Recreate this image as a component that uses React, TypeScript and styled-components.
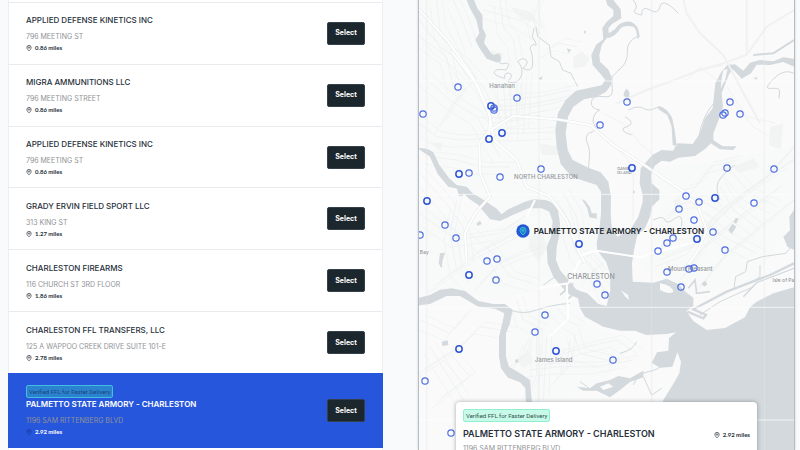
import React from "react";
import styled, { createGlobalStyle, css } from "styled-components";

const GlobalStyle = createGlobalStyle`
  * { box-sizing: border-box; }
  html, body { margin: 0; padding: 0; }
  body {
    background: #f8fafc;
    color: #27303a;
    font-family: Inter, "Open Sans", sans-serif;
    overflow: hidden;
  }
  h2, h3, p, ul { margin: 0; padding: 0; }
`;

const Page = styled.main`
  display: grid;
  grid-template-columns: 375fr 377fr;
  gap: 35px;
  padding: 0 5px 0 8px;
  height: 100vh;
`;

const DealerList = styled.ul`
  display: grid;
  grid-template-rows: repeat(6, minmax(min-content, 1fr)) 75px;
  padding: 2px 0;
  list-style: none;
  background: #fff;
  border-left: 1px solid #eceef1;
  border-right: 1px solid #eceef1;
`;

const DealerRow = styled.li<{ $selected?: boolean }>`
  display: flex;
  align-items: center;
  justify-content: space-between;
  padding: 0 17px;
  border-top: 1px solid #e9ebee;
  color: #27303a;
  ${(p) =>
    p.$selected &&
    css`
      margin: 0 -1px;
      padding: 0 18px;
      border-top-color: #2656dc;
      background: #2656dc;
      color: #fff;
    `}
`;

const DealerInfo = styled.div`
  display: flex;
  flex-direction: column;
  align-items: flex-start;
`;

const DealerName = styled.h3<{ $strong?: boolean }>`
  font-size: 8px;
  line-height: 12px;
  font-weight: ${(p) => (p.$strong ? 600 : 500)};
  white-space: nowrap;
`;

const Address = styled.p`
  margin-top: 5px;
  font-size: 7px;
  line-height: 12px;
  color: #8f9296;
  white-space: nowrap;
`;

const Distance = styled.p<{ $pin?: string }>`
  display: flex;
  align-items: center;
  gap: 3px;
  margin-top: 1px;
  font-family: Lato, sans-serif;
  font-size: 6px;
  line-height: 8px;
  font-weight: 700;
  white-space: nowrap;
  svg {
    width: 6px;
    height: 6px;
    color: ${(p) => p.$pin || "#3b434c"};
  }
`;

const Badge = styled.span<{ $onBlue?: boolean }>`
  display: flex;
  align-items: center;
  width: fit-content;
  height: 13px;
  padding: 0 2px;
  border: 1px solid ${(p) => (p.$onBlue ? "#43bde2" : "#91efd0")};
  border-radius: 2px;
  background: ${(p) => (p.$onBlue ? "#2b83d0" : "#c8fae9")};
  color: ${(p) => (p.$onBlue ? "#1b4379" : "#33504c")};
  font-family: Roboto, sans-serif;
  font-size: 6px;
  font-weight: 400;
  white-space: nowrap;
`;

const SelectButton = styled.button`
  width: 38px;
  height: 23px;
  padding: 0;
  border: 1px solid #34414b;
  border-radius: 2px;
  background: #1b262d;
  color: #fff;
  font: 700 7px/10px Inter, sans-serif;
  cursor: pointer;
`;

const MapPanel = styled.section`
  position: relative;
  height: 100vh;
  overflow: hidden;
  border-left: 1px solid #b9bcbe;
  border-right: 1px solid #b9bcbe;
  box-shadow: 0 0 2px #c9cccf;
  background: #fafafa;
`;

const MapDrawing = styled.svg`
  display: block;
  width: 100%;
  height: 100%;
`;

const Marker = styled.button`
  position: absolute;
  display: flex;
  width: 8px;
  height: 8px;
  padding: 0;
  border: 0;
  border-radius: 50%;
  background: transparent;
  transform: translate(-50%, -50%);
  cursor: pointer;
`;

const ActiveMarker = styled.button`
  position: absolute;
  display: flex;
  align-items: center;
  gap: 4px;
  height: 14px;
  padding: 0;
  border: 0;
  background: transparent;
  color: #20252b;
  font: 600 8px/14px Inter, sans-serif;
  white-space: nowrap;
  transform: translate(-7px, -50%);
  cursor: pointer;
  svg {
    width: 14px;
    height: 14px;
  }
`;

const Place = styled.span<{ $size: number }>`
  position: absolute;
  transform: translate(-50%, -50%);
  color: #93989c;
  font: 500 ${(p) => p.$size}px/8px Inter, "Open Sans", sans-serif;
  white-space: nowrap;
`;

const DetailCard = styled.article`
  position: absolute;
  top: calc(100% - 48px);
  left: 37px;
  right: 37px;
  padding: 7px;
  border-radius: 4px;
  background: #fff;
  box-shadow: 0 0 4px rgba(40, 50, 60, 0.4);
`;

const CardHeading = styled.div`
  display: flex;
  align-items: center;
  justify-content: space-between;
  margin-top: 5px;
`;

const CardName = styled.h2`
  font-size: 9px;
  line-height: 14px;
  font-weight: 600;
`;

const CardAddress = styled(Address)`
  margin-top: 2px;
`;

const Pin = () => (
  <svg viewBox="0 0 24 24" fill="none" stroke="currentColor" strokeWidth="3" aria-hidden="true">
    <path d="M20.5 10c0 5.500-4.500 10.500-8.500 13-4-2.500-8.500-7.500-8.500-13a8.500 8.500 0 0 1 17 0Z" />
    <circle cx="12" cy="10" r="3" />
  </svg>
);

type Dealer = { name: string; address: string; miles: string; verified?: boolean };

const dealers: Dealer[] = [
  { name: "APPLIED DEFENSE KINETICS INC", address: "796 MEETING ST", miles: "0.86 miles" },
  { name: "MIGRA AMMUNITIONS LLC", address: "796 MEETING STREET", miles: "0.86 miles" },
  { name: "APPLIED DEFENSE KINETICS INC", address: "796 MEETING ST", miles: "0.86 miles" },
  { name: "GRADY ERVIN FIELD SPORT LLC", address: "313 KING ST", miles: "1.27 miles" },
  { name: "CHARLESTON FIREARMS", address: "116 CHURCH ST 3RD FLOOR", miles: "1.86 miles" },
  { name: "CHARLESTON FFL TRANSFERS, LLC", address: "125 A WAPPOO CREEK DRIVE SUITE 101-E", miles: "2.78 miles" },
  { name: "PALMETTO STATE ARMORY - CHARLESTON", address: "1196 SAM RITTENBERG BLVD", miles: "2.92 miles", verified: true },
];

// Map coordinates: x 57..1182, y 0..1350. The third value marks stacked dealers.
const markers: [number, number, number?][] = [
  [175, 262], [351, 293], [68, 343], [273, 317, 1], [283, 324], [281, 331], [307, 400, 1],
  [266, 417, 1], [178, 521, 1], [208, 520], [299, 530], [424, 506], [82, 602, 1], [136, 676],
  [61, 704], [167, 714], [262, 783], [292, 778], [207, 824, 1], [289, 840], [538, 733, 1],
  [591, 853], [615, 886], [435, 944], [405, 995], [177, 1047, 1], [468, 1054, 1], [639, 1080],
  [76, 1142], [154, 1300], [682, 306], [600, 375], [696, 504, 1], [989, 307], [968, 344],
  [975, 339], [1020, 343], [981, 503], [1121, 508], [858, 587], [896, 605], [946, 594, 1],
  [1063, 610], [837, 628], [881, 660], [938, 697], [820, 714], [800, 730], [774, 754],
  [890, 717, 1], [974, 750], [866, 806], [881, 804], [802, 815], [842, 860],
];

const places: [string, number, number, number][] = [
  ["Hanahan", 306, 257, 6],
  ["NORTH CHARLESTON", 438, 530, 6],
  ["CHARLESTON", 573, 832, 7],
  ["DANIEL", 673, 506, 4],
  ["ISLAND", 673, 518, 4],
  ["James Island", 461, 1080, 6],
  ["Mount Pleasant", 871, 806, 6],
  ["Isle of Palms", 1163, 839, 5],
  ["Bay", 73, 755, 5],
];

const at = (x: number, y: number) => ({
  left: `${((x - 57) / 1125) * 100}%`,
  top: `${(y / 1350) * 100}%`,
});

const minorStreets = [
  "M57 60L120 140L190 190L250 260L300 360", "M70 230L150 300L230 350L300 470", "M110 0L120 90L170 180L215 250",
  "M160 0L190 70L215 140", "M60 110L140 170L160 260", "M300 300L420 290L510 270", "M250 330L340 330L460 310L530 290",
  "M270 370L350 360L420 345", "M300 400L380 400L470 395", "M310 250L320 380", "M350 240V370", "M380 230L370 400",
  "M250 30L360 60L420 100", "M300 0L310 80L340 120L350 180", "M420 0L400 50L410 100", "M440 150L480 130L530 140",
  "M57 370L110 410L180 420L260 415", "M60 520L130 600L190 680L205 800", "M90 470L170 480L240 500L330 500",
  "M120 380L170 300L200 260", "M57 640L130 690L170 720L300 700L390 640", "M100 860L170 810L230 760L310 720L370 690",
  "M170 600L150 700L170 810L210 850", "M210 700L280 760L330 830L400 850", "M240 850L300 790L370 760L430 740",
  "M57 1120L180 1040L240 980L330 995", "M150 1060L210 1130L130 1190L110 1205", "M60 960L150 1000L200 940",
  "M90 1040L140 1120L190 1200", "M390 1010L360 1080L330 1100", "M410 1000V1130L380 1190", "M440 1010L430 1200",
  "M390 1110L480 1100L590 1100L700 1080", "M460 1070L560 1040L650 1020L710 1060", "M520 1000L540 1060L620 1080",
  "M470 1140L500 1100L510 1020", "M470 920L500 960L540 980", "M350 900L370 960L430 990",
  "M490 630L510 700L530 760L590 820L620 890", "M490 580L530 650L540 720", "M540 780L580 760L620 810", "M560 830L610 790",
  "M800 650L850 610L900 600L970 640", "M770 750L830 700L920 690L1010 600L1100 530L1182 440",
  "M780 780L880 740L940 650L1030 580L1182 480", "M850 830L920 730L1020 650L1130 570", "M900 860L970 770L1080 680L1182 600",
  "M850 570L890 560L930 500L1010 480", "M900 650L970 710L1070 760", "M960 560L1000 630L1080 690", "M990 510L1050 580L1130 620",
  "M610 340L670 370L720 430L760 465", "M630 420L700 500L700 660", "M650 310L740 270L810 245L900 210L970 195",
  "M860 240L900 200L950 240", "M990 300L1060 380L1110 410", "M980 260L1040 350L1130 370", "M1040 160V0", "M850 0L860 40L900 100L970 165",
];

const creeks = [
  "M300 180q-5 15 15 10t3 20q-30-5-35 5t30 20q0-20 15-15t-5 25q30 10 40-15t-10-45q15-15 25-5t-10 25q30 15 30-15t-8-45q5-15 15-10t-8-25l5-25",
  "M408 80l5 30 35 25 5 35 25 15 10 25 25 10 20 40",
  "M710 110q-30 15-28 45t-20 50-25 25 0 35-25 25q-35-5-38 15t25 25q-20 10-20 35l15 30",
  "M570 395q-18 15-8 35t5 55 10 45", "M600 380l-30 20", "M685 330q30-15 45-5t35 0 30 5l20 25 5 35 5 50",
  "M675 350q35 20 5 30t15 25", "M700 0q15 20 5 30t20 15q0-30 25-15t30-10 40 5l15 15",
  "M1182 220q-30-15-60 15t-15 30 25 0 5 30", "M760 660q30-15 35 0t30-5 20 25",
  "M1182 730l-25 30-70 10-45 15-5 30-30 15-5 35", "M1080 795v35l-30 20", "M960 600q-15-35-5-55t50-50",
  "M57 915q50-45 100-35", "M330 930q40 15 80 0t100-20", "M660 1060q40-10 50-35", "M700 1155q15-35 45-40t50-25",
  "M950 300q-45 45-55 120", "M122 800q-5-25 12-40", "M480 820l-50 35", "M540 1145l35 25 30-5", "M730 1130l25 55 30-20",
];

const parks = [
  "M330 20l60 15 25 30-50-5z", "M520 170l25-15 25 20-15 25-35 5z", "M420 430l55 10 10 25-60 0z",
  "M1110 380l40-8-8 75-35-10z", "M390 710l35-25 15 60-25 40-30-45z", "M350 1080l35-30 15 35-30 20z",
  "M1000 500l60-25 20 25-65 20z", "M270 150l40 10-10 30z", "M90 425l40 5-10 25z", "M820 600l20-5 5 25-20 8z",
];

const ponds = [
  "M670 285l4-12 6-7 8 10v14l-10 3z", "M985 690l12-18 12 8-14 22z", "M1000 665l8-12 8 4-8 14z", "M905 850l12-8 5 12-10 6z",
  "M500 145l14 4-8 10z", "M550 95l8-4-2 12z", "M415 235l14-6-6 12z", "M700 570l6 6-8 6z", "M125 1025l18-4 2 14-18 3z",
  "M345 1080l8-3 2 10-8 2z", "M1060 235l10-4 2 8z", "M170 565l16 4 6 16-14 4z", "M500 868l14-8 8 8-14 10z",
];

const RegionMap = () => (
  <MapDrawing viewBox="57 0 1125 1350" preserveAspectRatio="xMidYMid slice" aria-hidden="true">
    <rect x="-1000" y="0" width="3200" height="1350" fill="#fafafa" />
    <g fill="#f8f9f9">
      <path d="M57 0H420L450 150L530 290L470 360L480 500L600 560V700L620 890L500 850L450 720L400 650L240 620L57 430Z" />
      <path d="M57 620L290 680L440 640L450 800L480 850L300 900L57 870Z" />
      <path d="M340 930L520 900L560 970L700 1030L620 1130L500 1190L410 1200L320 1080Z" />
      <path d="M770 500L900 490L1182 440V650L1060 850L880 880L730 810L780 650Z" />
    </g>
    <g fill="#f1f4f3">{parks.map((d) => <path key={d} d={d} />)}</g>

    <g fill="none" stroke="#ebedee" strokeWidth="2">
      {minorStreets.map((d) => <path key={d} d={d} />)}
    </g>
    <g fill="none" stroke="#eff1f1" strokeWidth="2">
      {minorStreets.slice(0, 51).map((d) => <path key={d} d={d} transform="translate(16 -14)" />)}
      {minorStreets.slice(0, 51).map((d) => <path key={d} d={d} transform="translate(-18 22)" />)}
    </g>
    <g fill="none" stroke="#d3d8db" strokeWidth="3" strokeLinejoin="round">
      {creeks.map((d) => <path key={d} d={d} />)}
    </g>

    <g fill="#d3d9dc">
      {ponds.map((d) => <path key={d} d={d} />)}
      <path d="M200 0H222L232 25L247 45L248 85L258 105L252 128L270 155L280 165L298 160L304 176L294 188L260 176L236 140L226 120L238 100L229 60L208 20Z" />
      <path d="M57 444Q85 444 100 457L118 495L148 535L170 555L200 560L218 580L255 602L290 626L305 643L325 628L375 605L402 598L435 600Q462 605 474 632L480 670L478 705L470 740L468 780L480 810L510 845L530 870L562 880L595 912L620 918L631 870L630 820L618 785L592 752L590 730L598 690L603 640L603 575L590 555L560 545L515 530L482 492L470 440L466 390L474 340L497 300L528 272L570 263L605 256L616 240L600 220L578 195L574 165L588 135L610 118L607 84L620 65L640 48L640 30L622 15L618 0H640L662 28L664 55L636 72L625 85L627 105L605 135L598 165L600 185L624 208L635 230L633 255L618 275L592 290L552 298L520 320L504 350L497 400L503 450L518 480L565 503L602 517L625 545L633 590L632 640L635 680L652 710L690 690L715 650L728 605L728 585L719 550L722 505L742 482L757 465L785 450L819 452L833 430L878 432L900 400L915 355L938 325L946 250L964 215L982 195L1005 193L1030 212L1050 188L1080 180L1120 184L1150 172L1182 176V200L1150 186L1110 195L1070 194L1053 220L1025 236L998 207L986 225L965 280L969 320L956 360L940 400L940 420L968 439H1010L1000 450L960 448L932 430L918 445L885 468L835 473L810 485L785 482L764 497L753 525L755 550L778 570V598L756 620L750 650L735 685L712 705L703 745L696 790L698 845L760 848L800 836L835 853L860 878L880 893V918L859 933L880 963L920 990L975 984L1035 952L1050 922L1070 905L1120 880L1182 862V1350H740L790 1200L818 1155L838 1120L843 1085L832 1057L817 1100L780 1103L755 1088L771 1057L805 1052L807 1015L828 997L800 1002L738 1005L705 992L660 992L610 980L555 950L540 925L534 895L510 885L485 860L460 830L443 790L440 740L453 710L458 665L448 635L425 625L385 625L350 640L300 663L270 658L235 615L205 595L180 568L145 560L113 522L90 470L57 448Z" />
      <path d="M57 893L90 885L120 869L155 865L195 873L235 903L280 912L315 912L338 930L330 970L318 1000V1070L327 1100L360 1120L390 1140L397 1220H378L376 1165L360 1147L324 1133L303 1105L297 1070V1010L307 970L313 940L285 926L235 920L180 888L140 888L90 912L57 916Z" />
      <path d="M700 80Q712 88 711 118L719 110Q718 75 692 65Q660 62 645 88L620 104L623 115Q648 108 660 87Q670 73 700 80Z" />
      <path d="M545 597L555 602L570 622L575 640H590V656L568 652L562 625Z" />
      <path d="M230 670L240 662L245 672L232 678Z" />
      <path d="M800 330L815 350L824 390L830 435H818L815 380L802 345L775 328V318Z" />
      <path d="M1182 630L1168 650L1170 690L1150 710L1162 740L1182 750Z" />
      <path d="M530 1160L570 1165L590 1150L630 1140L655 1128L690 1135L730 1112V1132L690 1146L660 1170L630 1192L590 1172L550 1172Z" />
      <path d="M120 760L135 758L128 780L125 805L116 790Z" />
    </g>
    <g fill="#fafafa">
      <path d="M662 870L684 885L687 900L676 890Z" />
      <path d="M780 850Q815 855 820 875Q805 885 780 870Z" />
      <path d="M965 235L970 210L983 207L975 240L962 265Z" />
      <path d="M600 1160L625 1150L640 1160L610 1170Z" />
    </g>
    <g fill="none" stroke="#d3d9dc" strokeWidth="6">
      <path d="M1060 165L1120 160L1182 120" />
      <path d="M862 935L910 955L918 945L880 928L980 875L1110 825L1182 790" strokeWidth="7" />
      <path d="M900 945L960 905L1060 860" strokeWidth="3" />
      <path d="M1182 805L1070 848L1030 890" strokeWidth="4" />
      <path d="M865 865L885 840L890 880L930 875" strokeWidth="5" />
      <path d="M480 885L520 850M500 900L535 870" strokeWidth="5" />
    </g>

    <g fill="none" stroke="#e7e9ea" strokeWidth="9" strokeLinejoin="round">
      <path d="M57 28L145 125L215 225L265 330L282 420L350 480L380 560L450 590L500 660L530 740L555 790" />
      <path d="M155 155L235 260L270 350L266 417" />
      <path d="M200 790L195 700L225 640L270 590L240 520L238 430L265 395L340 348L470 358L570 375L640 435L740 500L850 575L895 620L920 690L895 750L860 800" />
    </g>
    <g fill="none" stroke="#fff" strokeWidth="6" strokeLinejoin="round">
      <path d="M57 28L145 125L215 225L265 330L282 420L350 480L380 560L450 590L500 660L530 740L555 790" />
      <path d="M155 155L235 260L270 350L266 417" />
      <path d="M200 790L195 700L225 640L270 590L240 520L238 430L265 395L340 348L470 358L570 375L640 435L740 500L850 575L895 620L920 690L895 750L860 800" />
      <path d="M545 765L590 752L720 772L770 755L890 725" />
      <path d="M415 865L505 850L540 780M500 850L505 955L450 1010M380 650L405 600" />
    </g>
    <g fill="none" stroke="#f0f1f1" strokeWidth="6">
      <path d="M650 310L740 270L810 245L900 210L970 190L1040 165L1100 80L1182 30" />
      <path d="M1040 165V0M850 0L860 40L900 100L970 165L1020 260L1080 370" />
    </g>
    <path d="M80 0V1350M417 0V1350M755 0V1350M1093 0V1350" stroke="#e5e8e9" strokeWidth="2" opacity="0.7" />
    <path d="M57 243H1182M57 583H1182M57 922H1182M57 1260H1182" stroke="#fff" strokeWidth="3" opacity="0.7" />
  </MapDrawing>
);

export default function App() {
  const chosen = dealers[6];
  return (
    <>
      <GlobalStyle />
      <Page>
        <DealerList>
          {dealers.map((d, i) => (
            <DealerRow key={i} $selected={d.verified}>
              <DealerInfo>
                {d.verified && <Badge $onBlue>Verified FFL for Faster Delivery</Badge>}
                <DealerName $strong={d.verified}>{d.name}</DealerName>
                <Address>{d.address}</Address>
                <Distance $pin={d.verified ? "#1c3f9d" : undefined}>
                  <Pin />
                  {d.miles}
                </Distance>
              </DealerInfo>
              <SelectButton type="button" aria-label={`Select ${d.name}`}>Select</SelectButton>
            </DealerRow>
          ))}
        </DealerList>

        <MapPanel aria-label="Dealer map">
          <RegionMap />
          {places.map(([name, x, y, size]) => (
            <Place key={name} $size={size} style={at(x, y)}>{name}</Place>
          ))}
          {markers.map(([x, y, bold], i) => (
            <Marker key={i} type="button" style={at(x, y)} aria-label={`Dealer ${i + 1}`}>
              <svg viewBox="0 0 24 24" width="8" height="8" fill="none" aria-hidden="true">
                <circle cx="12" cy="12" r="9.500" stroke={bold ? "#2f55d4" : "#4d6de0"} strokeWidth={bold ? 4.5 : 3.5} />
              </svg>
            </Marker>
          ))}
          <ActiveMarker type="button" style={at(368, 694)}>
            <svg viewBox="0 0 42 42" fill="none" aria-hidden="true">
              <circle cx="21" cy="21" r="20" fill="#2457d6" />
              <path d="M30 19c0 6-5 10-9 14-4-4-9-8-9-14a9 9 0 0 1 18 0Z" fill="#2380cd" stroke="#36c0d2" strokeWidth="3" />
              <circle cx="21" cy="19" r="3" stroke="#48d3d4" strokeWidth="2" />
            </svg>
            {chosen.name}
          </ActiveMarker>
          <DetailCard>
            <Badge>Verified FFL for Faster Delivery</Badge>
            <CardHeading>
              <CardName>{chosen.name}</CardName>
              <Distance>
                <Pin />
                {chosen.miles}
              </Distance>
            </CardHeading>
            <CardAddress>{chosen.address}</CardAddress>
          </DetailCard>
        </MapPanel>
      </Page>
    </>
  );
}
